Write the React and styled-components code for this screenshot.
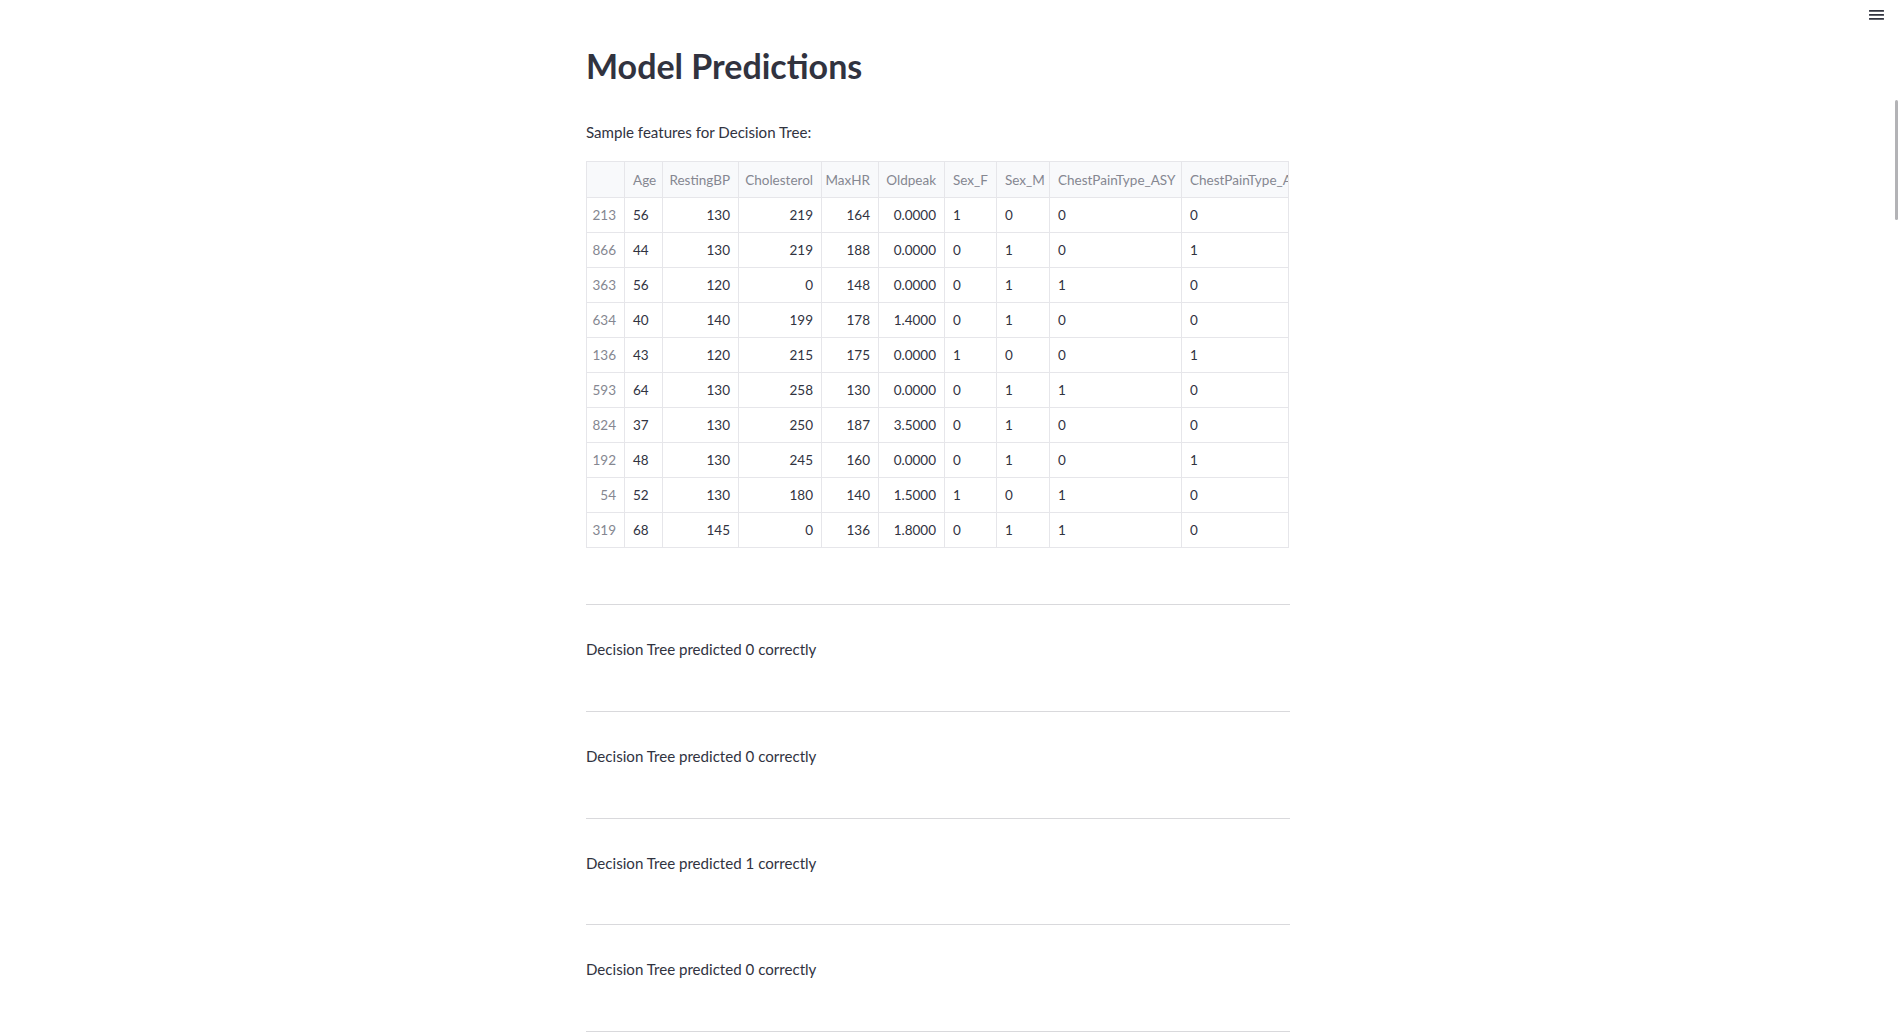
import React from "react";
import styled, { createGlobalStyle } from "styled-components";

const GlobalStyle = createGlobalStyle`
  html, body { margin: 0; padding: 0; background: #ffffff; overflow: hidden; }
  body { font-family: Lato, "Noto Sans", sans-serif; color: #31333f; }
  * { box-sizing: border-box; }
`;

const Page = styled.div`
  height: 1032px;
  overflow: hidden;
  padding-right: 22px;
`;

const TopBar = styled.header`
  position: fixed;
  top: 0;
  right: 0;
  display: flex;
  justify-content: flex-end;
  padding: 9px 14px 0 0;
`;

const MenuButton = styled.button`
  border: 0;
  background: transparent;
  padding: 0;
  width: 15px;
  height: 12px;
  display: flex;
  color: #31333f;
`;

const ScrollThumb = styled.div`
  position: fixed;
  right: 0;
  top: 100px;
  width: 3px;
  height: 120px;
  background: #b3b3b6;
  border-radius: 2px;
`;

const Block = styled.main`
  width: 704px;
  margin: 0 auto;
  padding-top: 46px;
  display: flex;
  flex-direction: column;
`;

const Title = styled.h1`
  margin: 0;
  font-size: 34px;
  font-weight: 700;
  line-height: 1.2;
  color: #31333f;
`;

const Text = styled.p`
  margin: 0;
  font-size: 15.1px;
  line-height: 25.6px;
  color: #31333f;
`;

const Caption = styled(Text)`
  margin-top: 33px;
`;

const TableFrame = styled.div`
  margin-top: 16px;
  width: 703px;
  border: 1px solid #e6e6ea;
  overflow: hidden;
`;

const Row = styled.div`
  display: flex;
  width: max-content;
  height: ${(p) => (p.$head ? 36 : p.$last ? 34 : 35)}px;
  border-bottom: ${(p) => (p.$last ? "0" : "1px solid #e6e6ea")};
  background: ${(p) => (p.$head ? "#f8f9fb" : "#ffffff")};
`;

const Cell = styled.div`
  flex: none;
  width: ${(p) => p.$w}px;
  height: 100%;
  border-right: 1px solid #e6e6ea;
  display: flex;
  align-items: center;
  justify-content: ${(p) => (p.$right ? "flex-end" : "flex-start")};
  padding: 0 8px;
  font-size: 13.5px;
  white-space: nowrap;
  overflow: hidden;
  color: ${(p) => (p.$muted ? "#858791" : "#31333f")};
`;

const Divider = styled.hr`
  margin: 0;
  border: 0;
  border-top: 1px solid #d9d9dc;
  height: 0;
`;

const Section = styled.section`
  padding: 32px 0 48px;
`;

const FirstDivider = styled(Divider)`
  margin-top: 56px;
`;

const columns = [
  { key: "idx", label: "", w: 38, right: true, muted: true },
  { key: "Age", label: "Age", w: 38 },
  { key: "RestingBP", label: "RestingBP", w: 76, right: true },
  { key: "Cholesterol", label: "Cholesterol", w: 83, right: true },
  { key: "MaxHR", label: "MaxHR", w: 57, right: true },
  { key: "Oldpeak", label: "Oldpeak", w: 66, right: true },
  { key: "Sex_F", label: "Sex_F", w: 52 },
  { key: "Sex_M", label: "Sex_M", w: 53 },
  { key: "ASY", label: "ChestPainType_ASY", w: 132 },
  { key: "ATA", label: "ChestPainType_ATA", w: 132 },
  { key: "NAP", label: "ChestPainType_NAP", w: 132 },
];

const rows = [
  [213, 56, 130, 219, 164, "0.0000", 1, 0, 0, 0, 1],
  [866, 44, 130, 219, 188, "0.0000", 0, 1, 0, 1, 0],
  [363, 56, 120, 0, 148, "0.0000", 0, 1, 1, 0, 0],
  [634, 40, 140, 199, 178, "1.4000", 0, 1, 0, 0, 1],
  [136, 43, 120, 215, 175, "0.0000", 1, 0, 0, 1, 0],
  [593, 64, 130, 258, 130, "0.0000", 0, 1, 1, 0, 0],
  [824, 37, 130, 250, 187, "3.5000", 0, 1, 0, 0, 1],
  [192, 48, 130, 245, 160, "0.0000", 0, 1, 0, 1, 0],
  [54, 52, 130, 180, 140, "1.5000", 1, 0, 1, 0, 0],
  [319, 68, 145, 0, 136, "1.8000", 0, 1, 1, 0, 0],
];

const predictions = [0, 0, 1, 0, 1];

function MenuIcon() {
  return (
    <svg width="15" height="12" viewBox="0 0 15 12" fill="currentColor">
      <rect x="0" y="1" width="15" height="1.7" rx="0.5" />
      <rect x="0" y="5" width="15" height="1.7" rx="0.5" />
      <rect x="0" y="9" width="15" height="1.7" rx="0.5" />
    </svg>
  );
}

export default function App() {
  return (
    <Page>
      <GlobalStyle />
      <TopBar>
        <MenuButton aria-label="menu">
          <MenuIcon />
        </MenuButton>
      </TopBar>
      <ScrollThumb />
      <Block>
        <Title>Model Predictions</Title>
        <Caption>Sample features for Decision Tree:</Caption>
        <TableFrame>
          <Row $head>
            {columns.map((c) => (
              <Cell key={c.key} $w={c.w} $right={c.right} $muted>
                {c.label}
              </Cell>
            ))}
          </Row>
          {rows.map((r, i) => (
            <Row key={r[0]} $last={i === rows.length - 1}>
              {columns.map((c, j) => (
                <Cell key={c.key} $w={c.w} $right={c.right} $muted={c.muted}>
                  {r[j]}
                </Cell>
              ))}
            </Row>
          ))}
        </TableFrame>
        <FirstDivider />
        {predictions.map((p, i) => (
          <React.Fragment key={i}>
            {i > 0 && <Divider />}
            <Section>
              <Text>Decision Tree predicted {p} correctly</Text>
            </Section>
          </React.Fragment>
        ))}
      </Block>
    </Page>
  );
}
